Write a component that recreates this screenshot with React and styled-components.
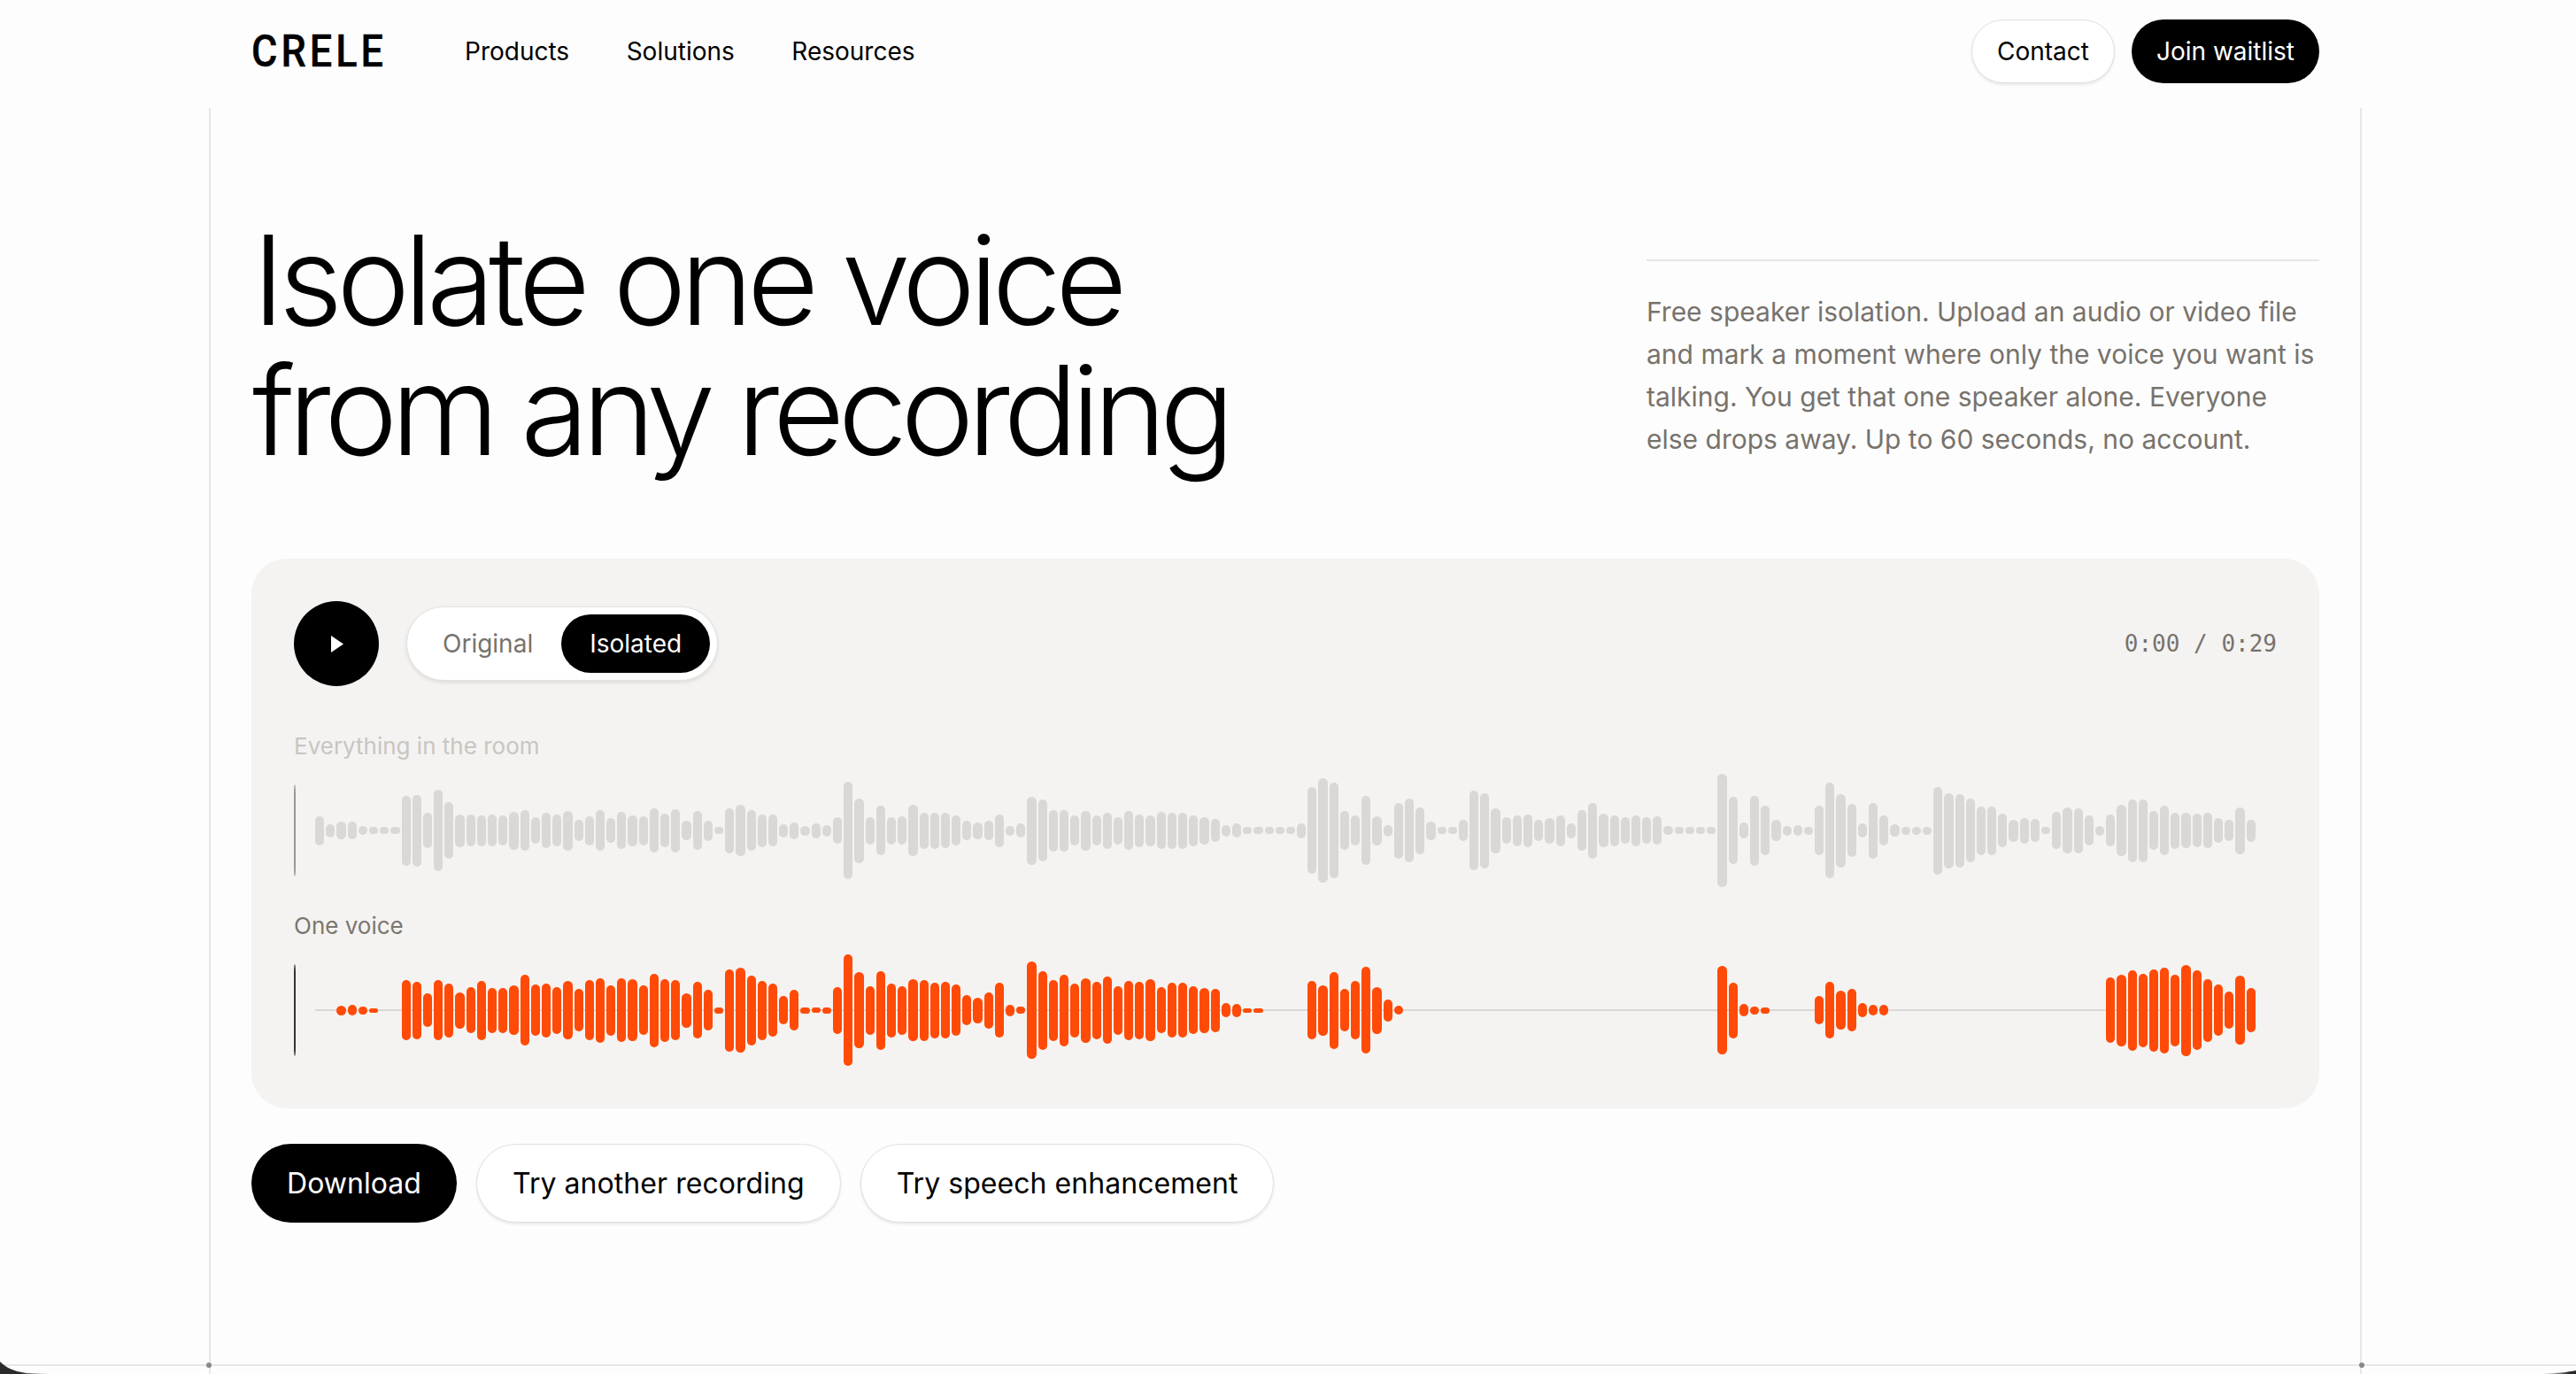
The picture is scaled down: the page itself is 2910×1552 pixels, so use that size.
import styled, { createGlobalStyle } from 'styled-components';

const roomBars = [
  33, 15, 20, 20, 10, 8, 8, 8, 79, 81, 40, 92, 64, 37, 36, 35, 36, 34, 43, 46, 30, 40, 36, 45, 24, 33, 46, 28, 42, 35,
  33, 50, 38, 49, 22, 44, 23, 8, 51, 58, 46, 37, 36, 15, 19, 11, 17, 13, 30, 110, 73, 31, 56, 31, 32, 58, 41, 41, 40, 34,
  22, 19, 22, 37, 11, 16, 77, 70, 47, 47, 34, 45, 34, 41, 31, 44, 37, 35, 42, 41, 41, 35, 31, 26, 13, 16, 8, 8, 8, 8,
  8, 17, 98, 118, 108, 44, 34, 78, 33, 13, 63, 72, 53, 21, 8, 8, 24, 90, 85, 51, 30, 35, 37, 24, 29, 35, 17, 46, 63, 38,
  35, 30, 35, 30, 32, 10, 8, 8, 8, 8, 128, 76, 18, 79, 56, 24, 11, 12, 9, 56, 108, 83, 60, 16, 63, 34, 14, 9, 9, 9,
  99, 85, 83, 72, 55, 55, 38, 25, 29, 26, 8, 42, 52, 51, 34, 11, 36, 58, 71, 71, 44, 56, 41, 40, 38, 40, 28, 24, 53, 25,
];

const voiceBars = [
  0, 0, 11, 12, 9, 5, 0, 0, 68, 65, 38, 68, 61, 41, 52, 67, 51, 51, 56, 80, 58, 61, 53, 66, 48, 68, 73, 57, 72, 70,
  56, 83, 71, 68, 39, 64, 46, 7, 93, 96, 79, 67, 60, 32, 46, 7, 6, 7, 53, 126, 86, 55, 89, 61, 55, 70, 69, 63, 64, 58,
  34, 29, 41, 62, 13, 8, 110, 89, 69, 81, 61, 73, 65, 76, 55, 67, 65, 70, 52, 62, 62, 54, 51, 49, 16, 15, 5, 5, 0, 0,
  0, 0, 66, 57, 87, 48, 66, 98, 53, 25, 10, 0, 0, 0, 0, 0, 0, 0, 0, 0, 0, 0, 0, 0, 0, 0, 0, 0, 0, 0,
  0, 0, 0, 0, 0, 0, 0, 0, 0, 0, 100, 63, 14, 9, 7, 0, 0, 0, 0, 32, 64, 44, 48, 16, 12, 12, 0, 0, 0, 0,
  0, 0, 0, 0, 0, 0, 0, 0, 0, 0, 0, 0, 0, 0, 0, 0, 74, 81, 91, 83, 93, 97, 81, 103, 90, 71, 58, 42, 78, 50,
];

function Wave({ bars, color, cursor, baseline }) {
  return (
    <Track>
      <Cursor $color={cursor} />
      <Bars>
        {baseline && <Baseline />}
        {bars.map((h, i) => (
          <Bar key={i} $color={color} style={{ height: h }} />
        ))}
      </Bars>
    </Track>
  );
}

export default function App() {
  return (
    <Frame>
      <GlobalStyle />
      <Nav>
        <NavLeft>
          <LogoSlot>
            <Logo>CRELE</Logo>
          </LogoSlot>
          <NavLinks>
            <NavLink>Products</NavLink>
            <NavLink>Solutions</NavLink>
            <NavLink>Resources</NavLink>
          </NavLinks>
        </NavLeft>
        <NavRight>
          <NavButton>Contact</NavButton>
          <NavButton $dark>Join waitlist</NavButton>
        </NavRight>
      </Nav>

      <Main>
        <Hero>
          <Title>
            <TitleLine $spacing={-6.9}>Isolate one voice</TitleLine>
            <TitleLine $spacing={-7.5}>from any recording</TitleLine>
          </Title>
          <Intro>
            Free speaker isolation. Upload an audio or video file and mark a moment where only the voice you want is
            talking. You get that one speaker alone. Everyone else drops away. Up to 60 seconds, no account.
          </Intro>
        </Hero>

        <Player>
          <PlayerHead>
            <PlayerControls>
              <PlayButton aria-label="Play">
                <svg width="14" height="19" viewBox="0 0 14 19">
                  <path d="M0 0 L14 9.5 L0 19 Z" fill="#ffffff" />
                </svg>
              </PlayButton>
              <Toggle>
                <ToggleOption>Original</ToggleOption>
                <ToggleOption $active>Isolated</ToggleOption>
              </Toggle>
            </PlayerControls>
            <Time>0:00 / 0:29</Time>
          </PlayerHead>
          <WaveLabel $color="#c9c5c0" $top={50}>Everything in the room</WaveLabel>
          <Wave bars={roomBars} color="#d9d8d6" cursor="#999894" />
          <WaveLabel $color="#7b7670" $top={20}>One voice</WaveLabel>
          <Wave bars={voiceBars} color="#ff4b07" cursor="#333331" baseline />
        </Player>

        <Actions>
          <ActionButton $dark>Download</ActionButton>
          <ActionButton>Try another recording</ActionButton>
          <ActionButton>Try speech enhancement</ActionButton>
        </Actions>
      </Main>

      <FootLine />
      <RailDot $side="left" />
      <RailDot $side="right" />
      <CornerLeft width="60" height="14" viewBox="0 0 60 14">
        <defs>
          <linearGradient id="cornerFadeLeft" x1="0" x2="1" y1="0" y2="0">
            <stop offset="0.4" stopColor="#2a2a2a" />
            <stop offset="1" stopColor="#2a2a2a" stopOpacity="0" />
          </linearGradient>
        </defs>
        <path d="M0 0 C6 6 14 11 30 13 L60 14 L0 14 Z" fill="url(#cornerFadeLeft)" />
      </CornerLeft>
      <CornerRight width="40" height="4" viewBox="0 0 40 4">
        <defs>
          <linearGradient id="cornerFadeRight" x1="1" x2="0" y1="0" y2="0">
            <stop offset="0.2" stopColor="#2a2a2a" />
            <stop offset="1" stopColor="#2a2a2a" stopOpacity="0" />
          </linearGradient>
        </defs>
        <path d="M40 0 C30 2 20 3 0 4 L40 4 Z" fill="url(#cornerFadeRight)" />
      </CornerRight>
    </Frame>
  );
}

const GlobalStyle = createGlobalStyle`
  html, body {
    margin: 0;
    background: #fdfdfd;
  }
  * {
    box-sizing: border-box;
  }
  body {
    font-family: Inter, "Liberation Sans", sans-serif;
    color: #000000;
  }
`;

const Frame = styled.div`
  position: relative;
  display: flex;
  flex-direction: column;
  width: 2910px;
  height: 1552px;
  overflow: hidden;
  background: #fdfdfd;
`;

const Nav = styled.header`
  display: flex;
  align-items: center;
  justify-content: space-between;
  height: 122px;
  padding: 0 290px 6px 284px;
  flex: none;
`;

const NavLeft = styled.div`
  display: flex;
  align-items: center;
`;

const LogoSlot = styled.div`
  width: 241px;
`;

const Logo = styled.div`
  font-family: Roboto, sans-serif;
  font-size: 50px;
  font-weight: 500;
  line-height: 1;
  letter-spacing: 4.5px;
  -webkit-text-stroke: 0.4px #000000;
  transform: scaleX(0.9);
  transform-origin: left center;
`;

const NavLinks = styled.nav`
  display: flex;
  gap: 64.5px;
`;

const NavLink = styled.a`
  font-size: 28px;
  line-height: 36px;
`;

const NavRight = styled.div`
  display: flex;
  gap: 19px;
`;

const NavButton = styled.button`
  height: 72px;
  padding: 0 28px;
  border: ${(p) => (p.$dark ? '0' : '1px solid #e4e0dc')};
  border-radius: 36px;
  background: ${(p) => (p.$dark ? '#000000' : '#ffffff')};
  color: ${(p) => (p.$dark ? '#ffffff' : '#000000')};
  box-shadow: ${(p) => (p.$dark ? 'none' : '0 2px 3px rgba(60, 50, 40, 0.1)')};
  font-family: inherit;
  font-size: 28px;
`;

const Main = styled.main`
  flex: 1;
  margin: 0 242px 0 236px;
  padding: 121px 46px 0 46px;
  border-left: 2px solid #e9e6e3;
  border-right: 2px solid #e9e6e3;
`;

const Hero = styled.section`
  display: grid;
  grid-template-columns: 1fr 760px;
`;

const Title = styled.h1`
  margin: 0 0 0 1px;
  font-size: 140px;
  font-weight: 300;
  line-height: 147px;
`;

const TitleLine = styled.span`
  display: block;
  letter-spacing: ${(p) => p.$spacing}px;
`;

const Intro = styled.p`
  margin: 50px 0 0;
  padding-top: 33px;
  border-top: 2px solid #e9e6e3;
  color: #77726c;
  font-size: 30px;
  line-height: 48px;
`;

const Player = styled.section`
  margin-top: 94px;
  padding: 48px 48px 41px;
  border-radius: 40px;
  background: #f4f3f1;
`;

const PlayerHead = styled.div`
  display: flex;
  align-items: center;
  justify-content: space-between;
`;

const PlayerControls = styled.div`
  display: flex;
  align-items: center;
  gap: 31px;
`;

const PlayButton = styled.button`
  display: flex;
  align-items: center;
  justify-content: center;
  width: 96px;
  height: 96px;
  padding: 0 0 0 2px;
  border: 0;
  border-radius: 50%;
  background: #000000;
`;

const Toggle = styled.div`
  display: flex;
  padding: 8px;
  border: 1px solid #e6e3df;
  border-radius: 42px;
  background: #ffffff;
  box-shadow: 0 2px 4px rgba(60, 50, 40, 0.12);
`;

const ToggleOption = styled.span`
  height: 66px;
  padding: 0 32px;
  border-radius: 33px;
  background: ${(p) => (p.$active ? '#000000' : 'transparent')};
  color: ${(p) => (p.$active ? '#ffffff' : '#77726c')};
  font-size: 28px;
  line-height: 66px;
`;

const Time = styled.div`
  color: #77726c;
  font-family: "DejaVu Sans Mono", monospace;
  font-size: 26px;
`;

const WaveLabel = styled.div`
  margin-top: ${(p) => p.$top}px;
  color: ${(p) => p.$color};
  font-size: 26px;
  line-height: 36px;
`;

const Track = styled.div`
  position: relative;
  height: 140px;
  margin-top: 7px;
  padding: 0 24px;
`;

const Cursor = styled.div`
  position: absolute;
  top: 18px;
  left: 0;
  width: 2px;
  height: 104px;
  border-radius: 1px / 10px;
  background: ${(p) => p.$color};
`;

const Bars = styled.div`
  position: relative;
  display: flex;
  align-items: center;
  gap: 2px;
  height: 100%;
`;

const Baseline = styled.div`
  position: absolute;
  top: 69px;
  left: 0;
  right: 0;
  height: 2px;
  background: #d9d8d6;
`;

const Bar = styled.div`
  position: relative;
  flex: 1 1 0;
  border-radius: 6px;
  background: ${(p) => p.$color};
`;

const Actions = styled.div`
  display: flex;
  gap: 22px;
  margin-top: 40px;
`;

const ActionButton = styled.button`
  height: 89px;
  padding: 0 40px;
  border: ${(p) => (p.$dark ? '0' : '1px solid #e4e0dc')};
  border-radius: 45px;
  background: ${(p) => (p.$dark ? '#000000' : '#ffffff')};
  color: ${(p) => (p.$dark ? '#ffffff' : '#000000')};
  box-shadow: ${(p) => (p.$dark ? 'none' : '0 2px 3px rgba(60, 50, 40, 0.1)')};
  font-family: inherit;
  font-size: 32px;
  letter-spacing: 0.05px;
`;

const FootLine = styled.div`
  position: absolute;
  left: 0;
  right: 0;
  bottom: 9px;
  height: 2px;
  background: #e9e6e3;
`;

const RailDot = styled.div`
  position: absolute;
  bottom: 7px;
  left: ${(p) => (p.$side === 'left' ? '233px' : '2665px')};
  width: 6px;
  height: 6px;
  border-radius: 50%;
  background: #8a8886;
`;

const CornerLeft = styled.svg`
  position: absolute;
  left: 0;
  bottom: 0;
`;

const CornerRight = styled.svg`
  position: absolute;
  right: 0;
  bottom: 0;
`;
